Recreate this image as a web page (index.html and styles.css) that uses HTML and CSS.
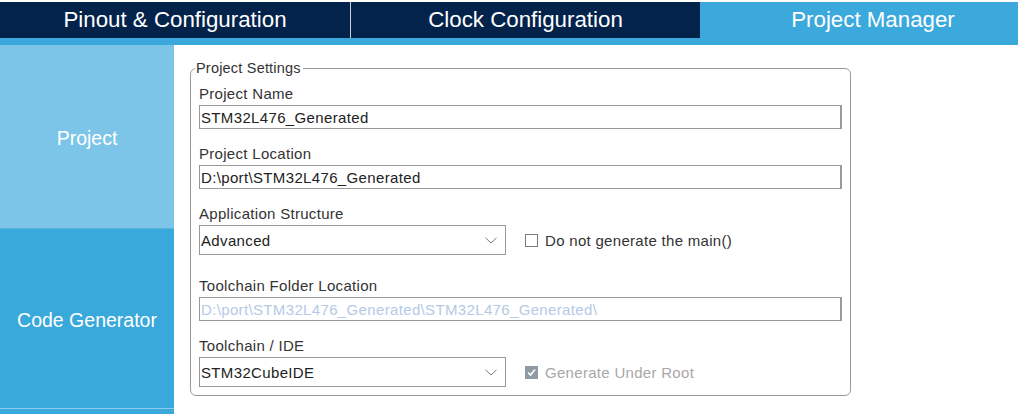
FILE: index.html
```html
<!DOCTYPE html>
<html>
<head>
<meta charset="utf-8">
<link rel="stylesheet" href="styles.css">
</head>
<body>
<div class="tabs">
  <div class="tab tab-pinout">Pinout &amp; Configuration</div>
  <div class="tab tab-clock">Clock Configuration</div>
  <div class="tab tab-active">Project Manager</div>
</div>
<div class="strip"></div>
<div class="main">
  <nav class="sidebar">
    <div class="side-item side-project">Project</div>
    <div class="side-item side-code">Code Generator</div>
    <div class="side-item side-more"></div>
  </nav>
  <div class="content">
    <fieldset class="settings">
      <legend>Project Settings</legend>
      <div class="field">
        <div class="label">Project Name</div>
        <div class="input">STM32L476_Generated</div>
      </div>
      <div class="field">
        <div class="label">Project Location</div>
        <div class="input">D:\port\STM32L476_Generated</div>
      </div>
      <div class="field">
        <div class="label">Application Structure</div>
        <div class="row">
          <div class="select"><span>Advanced</span>
            <svg class="chev" width="12" height="7" viewBox="0 0 12 7"><path d="M0.5 0.8 L6 6 L11.5 0.8" fill="none" stroke="#7a7a7a" stroke-width="1"/></svg>
          </div>
          <div class="check"><span class="box"></span><span class="check-text">Do not generate the main()</span></div>
        </div>
      </div>
      <div class="field field-gap">
        <div class="label">Toolchain Folder Location</div>
        <div class="input disabled">D:\port\STM32L476_Generated\STM32L476_Generated\</div>
      </div>
      <div class="field">
        <div class="label">Toolchain / IDE</div>
        <div class="row">
          <div class="select"><span>STM32CubeIDE</span>
            <svg class="chev" width="12" height="7" viewBox="0 0 12 7"><path d="M0.5 0.8 L6 6 L11.5 0.8" fill="none" stroke="#7a7a7a" stroke-width="1"/></svg>
          </div>
          <div class="check check-disabled"><span class="box box-checked">
            <svg width="11" height="11" viewBox="0 0 11 11"><path d="M2 5.5 L4.5 8 L9 2.5" fill="none" stroke="#fff" stroke-width="1.6"/></svg>
          </span><span class="check-text">Generate Under Root</span></div>
        </div>
      </div>
    </fieldset>
  </div>
</div>
</body>
</html>
```
FILE: styles.css
```css
html, body {
  margin: 0;
  padding: 0;
  background: #ffffff;
  font-family: "Liberation Sans", Arial, sans-serif;
  overflow: hidden;
}
.tabs {
  display: flex;
  margin-top: 2px;
  height: 36px;
  overflow: hidden;
}
.tab {
  display: flex;
  align-items: center;
  justify-content: center;
  flex-shrink: 0;
  color: #ffffff;
  font-size: 22.3px;
  background: #03234b;
}
.tab-pinout {
  width: 350px;
  border-right: 1px solid #c9d1dc;
}
.tab-clock {
  width: 349px;
}
.tab-active {
  width: 346px;
  background: #3ca9dc;
}
.strip {
  height: 7px;
  background: #3aa8db;
}
.main {
  display: flex;
}
.sidebar {
  width: 174px;
  display: flex;
  flex-direction: column;
}
.side-item {
  display: flex;
  align-items: center;
  justify-content: center;
  color: #ffffff;
  font-size: 19.5px;
}
.side-project {
  height: 183px;
  padding-top: 3px;
  box-sizing: border-box;
  background: #7dc5e8;
}
.side-code {
  height: 181px;
  padding-top: 4px;
  box-sizing: border-box;
  background: #39a8da;
  border-top: 1px solid #5cb6e0;
  border-bottom: 1px solid #8ccbeb;
}
.side-more {
  height: 10px;
  background: #39a8da;
}
.content {
  padding: 15px 0 0 16px;
}
.settings {
  margin: 0;
  width: 643px;
  padding: 7px 8px 8px 8px;
  border: 1px solid #9a9a9a;
  border-radius: 6px;
}
.settings legend {
  margin-left: -4px;
  padding: 0 2px 0 1px;
  font-size: 14.5px;
  letter-spacing: 0.2px;
  line-height: 16px;
  color: #333333;
}
.field {
  display: flex;
  flex-direction: column;
  margin-top: 14px;
}
.field:first-of-type {
  margin-top: 0;
}
.field-gap {
  margin-top: 20px;
}
.label {
  height: 22px;
  line-height: 22px;
  font-size: 15px;
  letter-spacing: 0.3px;
  color: #333333;
}
.input {
  height: 22px;
  line-height: 23px;
  border: 1px solid #9a9a9a;
  border-right-width: 2px;
  padding-left: 1px;
  font-size: 15px;
  letter-spacing: 0.35px;
  color: #222222;
  box-sizing: content-box;
}
.input.disabled {
  color: #b4cae6;
}
.row {
  display: flex;
  align-items: center;
}
.select {
  width: 304px;
  height: 28px;
  border: 1px solid #9a9a9a;
  display: flex;
  align-items: center;
  justify-content: space-between;
  padding-left: 1px;
  font-size: 15px;
  letter-spacing: 0.35px;
  color: #222222;
}
.chev {
  margin-right: 8px;
}
.check {
  display: flex;
  align-items: center;
  margin-left: 19px;
  font-size: 15px;
  letter-spacing: 0.3px;
  color: #333333;
}
.box {
  width: 11px;
  height: 11px;
  border: 1px solid #7a7a7a;
  background: #ffffff;
  margin-right: 7px;
  display: flex;
}
.box-checked {
  width: 13px;
  height: 13px;
  border: 0;
  background: #8f9aa5;
  align-items: center;
  justify-content: center;
}
.check-disabled {
  color: #a8a8a8;
}
```
